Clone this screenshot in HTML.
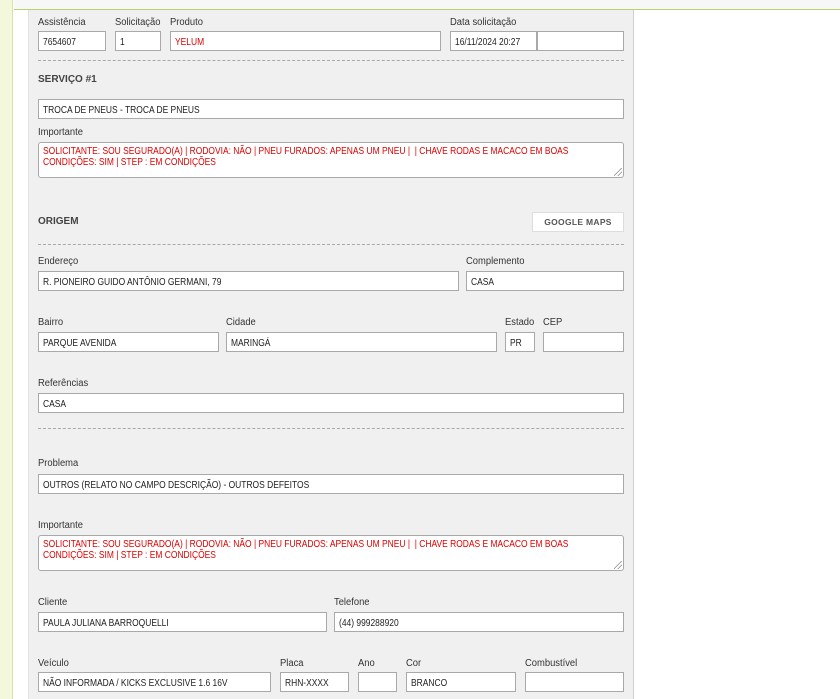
<!DOCTYPE html>
<html><head><meta charset="utf-8"><style>
*{box-sizing:border-box;margin:0;padding:0}
body{width:840px;height:699px;overflow:hidden;background:#fff;position:relative;font-family:"Liberation Sans",sans-serif}
.strip{position:absolute;left:0;top:0;width:13px;height:699px;background:#f3f7dc;border-right:1px solid #d9e3a8}
.top{position:absolute;left:14px;top:0;width:826px;height:10px;background:#f7f7f7;border-bottom:1px solid #b9d36a}
.panel{position:absolute;left:28px;top:10px;width:606px;height:689px;background:#f0f0f0;border-left:1px solid #e2e2e2;border-right:1px solid #d0d0d0}
.l{position:absolute;font-size:10px;color:#333;transform:scaleX(.94);transform-origin:0 0;white-space:nowrap}
.i{position:absolute;height:20px;background:#fff;border:1px solid #a9a9a9;font-size:10px;color:#222;padding:5px 0 0 4px;white-space:nowrap;overflow:hidden}
.i span,.t span{display:inline-block;transform:scaleX(.845);transform-origin:0 0}
.t{position:absolute;background:#fff;border:1px solid #a9a9a9;border-radius:3px;font-size:10px;color:#e00000;padding:3px 4px;line-height:11px;white-space:nowrap}
.red{color:#e00000}
.d{position:absolute;left:38px;width:586px;border-top:1px dashed #a9a9a9}
.h{position:absolute;font-size:10px;font-weight:bold;color:#444}
.btn{position:absolute;left:532px;top:212px;width:92px;height:20px;background:#fff;border:1px solid #ddd;font-size:8.5px;font-weight:bold;color:#555;text-align:center;line-height:18px;letter-spacing:.3px}
.grip{position:absolute;right:1px;bottom:1px;width:8px;height:8px;background:linear-gradient(135deg,transparent 45%,#888 46%,#888 52%,transparent 53%,transparent 70%,#888 71%,#888 77%,transparent 78%)}
</style></head><body>
<div class="strip"></div><div class="top"></div><div class="panel"></div>

<div class="l" style="left:38px;top:17px">Assistência</div>
<div class="l" style="left:115px;top:17px">Solicitação</div>
<div class="l" style="left:170px;top:17px">Produto</div>
<div class="l" style="left:450px;top:17px">Data solicitação</div>
<div class="i" style="left:38px;top:31px;width:68px"><span>7654607</span></div>
<div class="i" style="left:115px;top:31px;width:46px"><span>1</span></div>
<div class="i red" style="left:170px;top:31px;width:271px"><span>YELUM</span></div>
<div class="i" style="left:450px;top:31px;width:87px"><span>16/11/2024 20:27</span></div>
<div class="i" style="left:537px;top:31px;width:87px"></div>
<div class="d" style="top:60px"></div>

<div class="h" style="left:38px;top:74px">SERVIÇO #1</div>
<div class="i" style="left:38px;top:99px;width:586px"><span>TROCA DE PNEUS - TROCA DE PNEUS</span></div>
<div class="l" style="left:38px;top:127px">Importante</div>
<div class="t" style="left:38px;top:142px;width:586px;height:36px"><span>SOLICITANTE: SOU SEGURADO(A) | RODOVIA: NÃO | PNEU FURADOS: APENAS UM PNEU | &nbsp;| CHAVE RODAS E MACACO EM BOAS<br>CONDIÇÕES: SIM | STEP : EM CONDIÇÕES</span><div class="grip"></div></div>

<div class="h" style="left:38px;top:216px">ORIGEM</div>
<div class="btn">GOOGLE MAPS</div>
<div class="d" style="top:244px"></div>

<div class="l" style="left:38px;top:256px">Endereço</div>
<div class="l" style="left:466px;top:256px">Complemento</div>
<div class="i" style="left:38px;top:271px;width:421px"><span>R. PIONEIRO GUIDO ANTÔNIO GERMANI, 79</span></div>
<div class="i" style="left:466px;top:271px;width:158px"><span>CASA</span></div>

<div class="l" style="left:38px;top:317px">Bairro</div>
<div class="l" style="left:226px;top:317px">Cidade</div>
<div class="l" style="left:505px;top:317px">Estado</div>
<div class="l" style="left:543px;top:317px">CEP</div>
<div class="i" style="left:38px;top:332px;width:181px"><span>PARQUE AVENIDA</span></div>
<div class="i" style="left:226px;top:332px;width:271px"><span>MARINGÁ</span></div>
<div class="i" style="left:505px;top:332px;width:30px"><span>PR</span></div>
<div class="i" style="left:543px;top:332px;width:81px"></div>

<div class="l" style="left:38px;top:378px">Referências</div>
<div class="i" style="left:38px;top:393px;width:586px"><span>CASA</span></div>
<div class="d" style="top:428px"></div>

<div class="l" style="left:38px;top:458px">Problema</div>
<div class="i" style="left:38px;top:474px;width:586px"><span>OUTROS (RELATO NO CAMPO DESCRIÇÃO) - OUTROS DEFEITOS</span></div>
<div class="l" style="left:38px;top:520px">Importante</div>
<div class="t" style="left:38px;top:535px;width:586px;height:36px"><span>SOLICITANTE: SOU SEGURADO(A) | RODOVIA: NÃO | PNEU FURADOS: APENAS UM PNEU | &nbsp;| CHAVE RODAS E MACACO EM BOAS<br>CONDIÇÕES: SIM | STEP : EM CONDIÇÕES</span><div class="grip"></div></div>

<div class="l" style="left:38px;top:597px">Cliente</div>
<div class="l" style="left:334px;top:597px">Telefone</div>
<div class="i" style="left:38px;top:612px;width:289px"><span>PAULA JULIANA BARROQUELLI</span></div>
<div class="i" style="left:334px;top:612px;width:290px"><span>(44) 999288920</span></div>

<div class="l" style="left:38px;top:658px">Veículo</div>
<div class="l" style="left:280px;top:658px">Placa</div>
<div class="l" style="left:358px;top:658px">Ano</div>
<div class="l" style="left:406px;top:658px">Cor</div>
<div class="l" style="left:525px;top:658px">Combustível</div>
<div class="i" style="left:38px;top:672px;width:233px"><span>NÃO INFORMADA / KICKS EXCLUSIVE 1.6 16V</span></div>
<div class="i" style="left:280px;top:672px;width:69px"><span>RHN-XXXX</span></div>
<div class="i" style="left:358px;top:672px;width:39px"></div>
<div class="i" style="left:406px;top:672px;width:110px"><span>BRANCO</span></div>
<div class="i" style="left:525px;top:672px;width:99px"></div>
</body></html>
